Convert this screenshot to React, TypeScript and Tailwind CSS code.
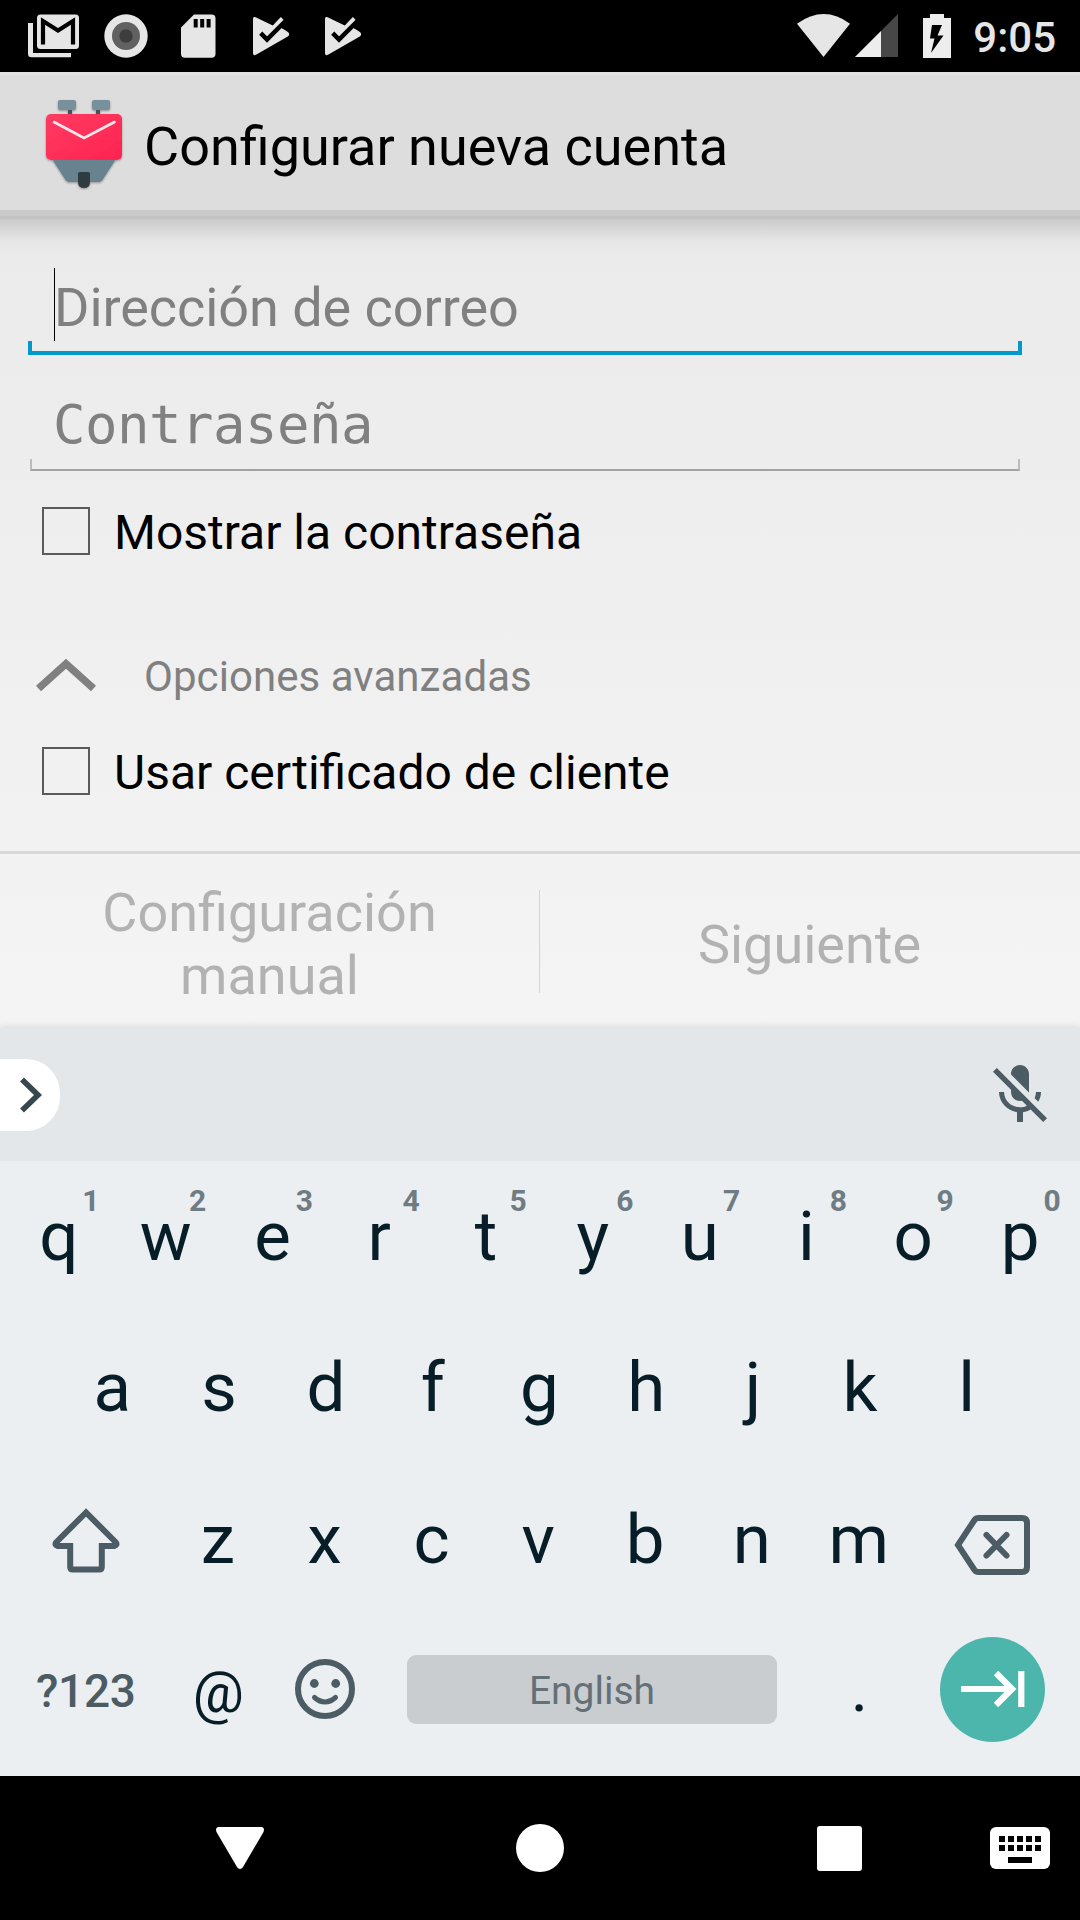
import React from "react";

const ink = "#4c5c64";

function GmailIcon() {
  return (
    <svg className="block h-[44px] w-[52px]" viewBox="28 14 52 44">
      <path d="M28 23h5v30h38v4.300H31.500a3.500 3.500 0 0 1-3.500-3.500z" fill="#e6e6e6" />
      <rect x="37" y="14.600" width="42" height="34.400" rx="3.500" fill="#e6e6e6" />
      <path d="M43 44.500V21l15 9.500L73 21v23.500" fill="none" stroke="#000" strokeWidth="4.200" />
    </svg>
  );
}

function PlayCheckIcon() {
  return (
    <svg className="block h-[44px] w-[37px]" viewBox="253 14 37 44">
      <path
        d="M253 19c0-1.800 1-2.500 2.600-1.700L272.800 25.500l8-8.500 3 3L279.500 26l8.300 6c1.800 1 1.800 3.500 0 4.500L256 54.800c-1.700.9-3 .2-3-1.700z"
        fill="#e6e6e6"
      />
      <path d="M260.700 33.200l6.300 6.300 18.500-18.500" fill="none" stroke="#000" strokeWidth="4.500" />
      <path d="M280 25.500l6.500-4v9.200l-6-3.200z" fill="#000" />
    </svg>
  );
}

function StatusBar() {
  return (
    <div className="flex h-[72px] items-center bg-black pr-[24px] pl-[28px]">
      <GmailIcon />
      <svg className="ml-[24px] block h-[44px] w-[44px]" viewBox="0 0 44 44">
        <circle cx="22" cy="22" r="21.700" fill="#e6e6e6" />
        <circle cx="22" cy="22" r="14" fill="#616161" />
        <circle cx="22" cy="22" r="6.700" fill="#3d3d3d" />
      </svg>
      <svg className="ml-[32px] block h-[44px] w-[36px]" viewBox="180 14 36 44">
        <path d="M194 14.500h17.500a4 4 0 0 1 4 4v35.200a4 4 0 0 1-4 4H185a4 4 0 0 1-4-4V27.500z" fill="#e6e6e6" />
        <path d="M193.700 19h4v8.500h-4zM200.200 19h4v8.500h-4zM206.600 19h4v8.500h-4z" fill="#000" />
      </svg>
      <div className="ml-[37px] flex gap-[35px]">
        <PlayCheckIcon />
        <PlayCheckIcon />
      </div>
      <div className="flex-1" />
      <svg className="block h-[44px] w-[54px]" viewBox="797 14 54 44">
        <path d="M797 23.700Q824 4.500 850 23.700L823.500 57z" fill="#e6e6e6" />
      </svg>
      <svg className="ml-[4px] block h-[44px] w-[44px]" viewBox="855 14 44 44">
        <path d="M898 14v43h-43z" fill="#474747" />
        <path d="M881 31v26h-26z" fill="#ededed" />
      </svg>
      <svg className="ml-[24px] block h-[44px] w-[28px]" viewBox="923 14 28 44">
        <path d="M930 14h14v4h7v40h-28V18h7z" fill="#ededed" />
        <path d="M932 25h10l-4.500 10.500h6L931 53l3.500-14.500h-4.500z" fill="#000" />
      </svg>
      <span className="ml-[22px] pt-[3px] text-[42px] leading-[74px] font-medium text-[#e6e6e6]">9:05</span>
    </div>
  );
}

function K9Logo() {
  return (
    <svg className="mb-[4px] block h-[96px] w-[84px]" viewBox="42 96 84 96">
      <defs>
        <linearGradient id="envelope" x1="0" y1="0" x2="1" y2="1">
          <stop offset="0" stopColor="#ff3b62" />
          <stop offset="1" stopColor="#ff2350" />
        </linearGradient>
        <filter id="soft" x="-10%" y="-10%" width="120%" height="125%">
          <feDropShadow dx="0" dy="1" stdDeviation="1" floodOpacity="0.35" />
        </filter>
      </defs>
      <g filter="url(#soft)">
        <path d="M68 109h4v6h-4zM96 109h4v6h-4z" fill="#455259" />
        <rect x="58" y="100" width="18" height="10" rx="2" fill="#78909c" />
        <rect x="92" y="100" width="18" height="10" rx="2" fill="#78909c" />
        <path d="M52 159h64l-13.500 21q-1.200 2-3.500 2H69q-2.300 0-3.500-2z" fill="#67838f" />
        <path d="M78 174q0-2 2-2h8q2 0 2 2v8q0 6-6 6t-6-6z" fill="#2f3b41" />
        <rect x="46" y="114" width="76" height="46" rx="5" fill="url(#envelope)" />
      </g>
      <path d="M54 122l30 16 30.500-16" fill="none" stroke="#ffe9ee" strokeWidth="2.600" strokeLinecap="round" />
    </svg>
  );
}

function Checkbox({ label }: { label: string }) {
  return (
    <label className="flex h-[60px] items-center pl-[42px]">
      <span className="size-[48px] border-2 border-[#5a5a5a]" />
      <span className="ml-[24px] pt-[3px] text-[48px] leading-[57px] text-black">{label}</span>
    </label>
  );
}

function Form() {
  return (
    <div className="h-[632px] bg-linear-to-b from-[#cbcbcb] via-[#e6e6e6] via-[22px] to-transparent to-[36px]">
      <div className="ml-[28px] flex h-[136px] w-[994px] flex-col justify-end">
        <div className="flex h-[73px] items-center pl-[26px]">
          <span className="h-[73px] w-px bg-black" />
          <span className="-ml-px pt-[7px] text-[54px] leading-[66px] tracking-[-0.050px] whitespace-nowrap text-[#808080]">
            Dirección de correo
          </span>
        </div>
        <div className="h-[14px] border-4 border-t-0 border-[#0099cc]" />
      </div>
      <div className="ml-[30px] flex h-[116px] w-[990px] flex-col justify-end">
        <span className="pl-[23px] font-['DejaVu_Sans_Mono',monospace] text-[54px] leading-[68px] tracking-[-0.500px] text-[#808080]">
          Contraseña
        </span>
        <div className="h-[12px] border-x-2 border-b-2 border-x-[#bcbcbc] border-b-[#a3a3a3]" />
      </div>
      <div className="pt-[30px]">
        <Checkbox label="Mostrar la contraseña" />
      </div>
      <div className="mt-[84px] flex h-[60px] items-center pl-[36px]">
        <svg className="block h-[34px] w-[60px]" viewBox="36 658 60 34">
          <path d="M38.500 688.500L66 663.800l27.500 24.700" fill="none" stroke="#808080" strokeWidth="7.500" />
        </svg>
        <span className="ml-[48px] pt-[4px] text-[42px] leading-[50px] tracking-[0.060px] text-[#808080]">
          Opciones avanzadas
        </span>
      </div>
      <div className="pt-[36px]">
        <Checkbox label="Usar certificado de cliente" />
      </div>
    </div>
  );
}

function Footer() {
  return (
    <div className="flex h-[177px] items-center border-t-[3px] border-[#d9d9d9] text-center text-[54px] leading-[63px] text-[#b2b2b2]">
      <div className="w-[539px] px-[60px] pt-[6px]">Configuración manual</div>
      <div className="h-[103px] w-px bg-[#d4d4d4]" />
      <div className="w-[539px] pt-[6px]">Siguiente</div>
    </div>
  );
}

function Key({ letter, hint }: { letter: string; hint?: string }) {
  return (
    <div className="relative flex h-full w-[106.800px] shrink-0 items-center justify-center pr-[1px] text-[69px] leading-[81px] text-[#071e28]">
      {letter}
      {hint && (
        <span className="absolute top-[22px] right-[12px] w-[20px] text-center text-[30px] leading-[36px] font-bold text-[#6f7c83]">
          {hint}
        </span>
      )}
    </div>
  );
}

function Keyboard() {
  return (
    <div className="relative h-[748px] bg-[#ebeff2] shadow-[0_-1px_8px_rgba(0,0,0,0.12)]">
      <div className="flex h-[133px] items-center justify-between bg-[#e3e7ea] pr-[24px]">
        <div className="flex h-[72px] w-[60px] items-center rounded-r-[34px] bg-white pl-[18px]">
          <svg className="block h-[38px] w-[26px]" viewBox="18 1076 26 38">
            <path d="M22 1079.500l16 15.500-16 15.500" fill="none" stroke="#37474f" strokeWidth="5.600" />
          </svg>
        </div>
        <svg className="block size-[72px]" viewBox="0 0 24 24" fill={ink}>
          <path d="M19 11h-1.700c0 .74-.16 1.430-.43 2.050l1.230 1.230c.56-.98.9-2.090.9-3.280zm-4.020.17c0-.06.02-.11.02-.17V5c0-1.660-1.340-3-3-3S9 3.340 9 5v.18l5.980 5.990zM4.270 3L3 4.270l6.010 6.010V11c0 1.660 1.330 3 2.990 3 .22 0 .44-.03.65-.08l1.660 1.660c-.71.33-1.500.52-2.310.52-2.760 0-5.300-2.100-5.300-5.100H5c0 3.410 2.720 6.230 6 6.720V21h2v-3.280c.91-.13 1.770-.45 2.540-.9L19.730 21 21 19.730 4.270 3z" />
        </svg>
      </div>
      <div className="flex h-[151.500px] justify-center">
        {"qwertyuiop".split("").map((c, i) => (
          <Key key={c} letter={c} hint={"1234567890"[i]} />
        ))}
      </div>
      <div className="flex h-[150.500px] justify-center">
        {"asdfghjkl".split("").map((c) => (
          <Key key={c} letter={c} />
        ))}
      </div>
      <div className="flex h-[152.500px] items-center">
        <div className="w-[165px] pt-[2px] pl-[50px]">
          <svg className="block h-[68px] w-[72px]" viewBox="50 1507 72 68">
            <path
              d="M86 1513.500L56 1543.500q-1.500 2.500 1.500 3.500h12.700v21q0 2.500 2.500 2.500h26.600q2.500 0 2.500-2.500v-21h12.700q3-1 1.500-3.500z"
              fill="none"
              stroke={ink}
              strokeWidth="6"
            />
          </svg>
        </div>
        {"zxcvbnm".split("").map((c) => (
          <Key key={c} letter={c} />
        ))}
        <svg className="mt-[12px] ml-[40px] block h-[64px] w-[78px]" viewBox="953 1513 78 64">
          <path
            d="M958 1545l16.500-25q1.500-2 4-2H1022q5 0 5 5v44q0 5-5 5h-43.500q-2.500 0-4-2z"
            fill="none"
            stroke={ink}
            strokeWidth="6"
          />
          <path d="M986.500 1535l20 20.500M1006.500 1535l-20 20.500" stroke={ink} strokeWidth="6" strokeLinecap="round" />
        </svg>
      </div>
      <div className="flex h-[147px] items-center">
        <div className="w-[165px] pt-[3px] pl-[36px] text-[46px] leading-[54px] font-medium tracking-[-0.300px] text-[#4c5c64]">
          ?123
        </div>
        <div className="w-[106.800px] pt-[8px] text-center text-[57px] leading-[66px] text-[#071e28]">@</div>
        <div className="flex w-[106.800px] justify-center">
          <svg className="block size-[62px]" viewBox="294 1658 62 62">
            <circle cx="325" cy="1689" r="27" fill="none" stroke={ink} strokeWidth="6" />
            <circle cx="314.300" cy="1683.500" r="4.400" fill={ink} />
            <circle cx="335.700" cy="1683.500" r="4.400" fill={ink} />
            <path d="M314.500 1697.500q10.500 9 21 0" fill="none" stroke={ink} strokeWidth="5" strokeLinecap="round" />
          </svg>
        </div>
        <div className="ml-[28.400px] flex h-[69px] w-[370px] items-center justify-center rounded-[9px] bg-[#c9cdd0] pt-[3px] text-[39px] leading-[46px] text-[#647078]">
          English
        </div>
        <div className="ml-[29px] w-[106.800px] text-center text-[66px] leading-[78px] text-[#071e28]">.</div>
        <div className="ml-[27.500px] flex size-[105px] items-center justify-center rounded-full bg-[#4db6ac]">
          <svg className="block h-[38px] w-[66px]" viewBox="960 1670 66 38">
            <path
              d="M961 1689h50M996 1673l16 16-16 16M1021.300 1671v36"
              fill="none"
              stroke="#fff"
              strokeWidth="6.200"
            />
          </svg>
        </div>
      </div>
    </div>
  );
}

function NavBar() {
  return (
    <div className="flex h-[144px] items-center bg-black pl-[216px]">
      <svg className="block h-[42px] w-[48px]" viewBox="0 0 48 42">
        <path d="M3 0h42c3 0 3.500 2.500 2.500 5L27 40q-3 4-6 0L.5 5C-.5 2.500 0 0 3 0z" fill="#fff" />
      </svg>
      <div className="ml-[252px] size-[48px] rounded-full bg-white" />
      <div className="ml-[253px] size-[45px] rounded-[3px] bg-white" />
      <svg className="ml-[128px] block h-[42px] w-[60px]" viewBox="0 0 60 42">
        <rect width="60" height="42" rx="6" fill="#fff" />
        {[9, 18, 27, 36, 45].map((x) => (
          <path key={x} d={`M${x} 9h6v6h-6zM${x} 18h6v6h-6z`} fill="#000" />
        ))}
        <path d="M18 30h24v6H18z" fill="#000" />
      </svg>
    </div>
  );
}

export default function App() {
  return (
    <div className="h-[1920px] w-[1080px] overflow-hidden bg-linear-to-b from-[#e8e8e8] to-[#ffffff] font-[Roboto,sans-serif]">
      <StatusBar />
      <header className="flex h-[147px] items-center border-t-[3px] border-b-[3px] border-t-[#e3e3e3] border-b-[#c2c2c2] bg-[#dddddd] pl-[42px] shadow-[inset_0_-6px_0_#cacaca]">
        <K9Logo />
        <h1 className="ml-[18px] pt-[2px] text-[54px] leading-[64px] text-black">Configurar nueva cuenta</h1>
      </header>
      <Form />
      <Footer />
      <Keyboard />
      <NavBar />
    </div>
  );
}
